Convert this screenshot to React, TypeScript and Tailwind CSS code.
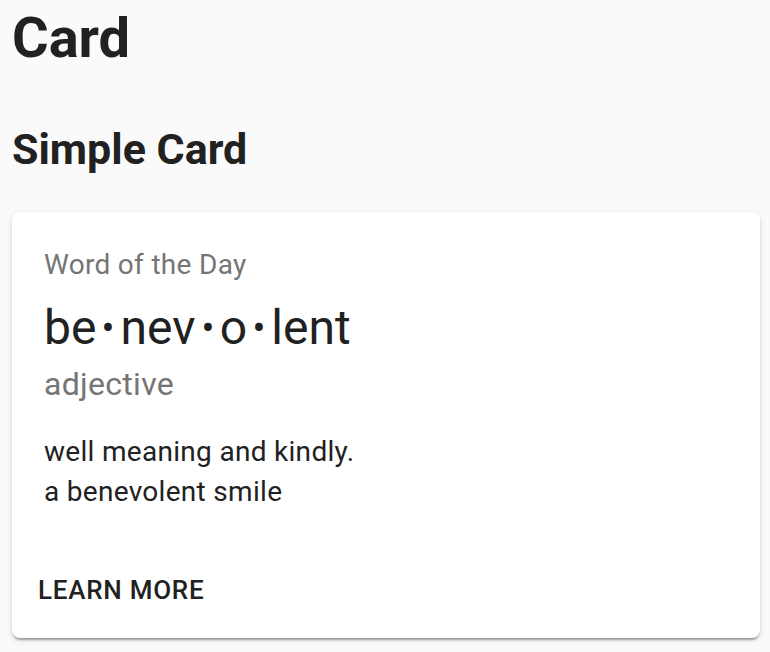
import React from "react";

function Bull() {
  return <span className="mx-[4px] inline-block scale-[0.8]">•</span>;
}

export default function App() {
  return (
    <div
      className="min-h-[652px] bg-[#fafafa] px-[12px] pt-[10px] text-[#212121]"
      style={{ fontFamily: "Roboto, 'Liberation Sans', sans-serif" }}
    >
      <h1 className="m-0 text-[56px] font-bold leading-none">Card</h1>
      <h2 className="mt-[62px] text-[43px] font-bold leading-none">Simple Card</h2>
      <div className="mt-[41px] w-[748px] rounded-[8px] bg-white shadow-[0_4px_2px_-2px_rgba(0,0,0,0.2),0_2px_2px_0_rgba(0,0,0,0.14),0_2px_6px_0_rgba(0,0,0,0.12)]">
        <div className="px-[32px] pt-[33px]">
          <div className="mb-[11px] text-[28px] leading-[40px] tracking-[0.3px] text-[#757575]">Word of the Day</div>
          <div className="text-[48px] leading-[64px] text-[#212121]">
            be<Bull />nev<Bull />o<Bull />lent
          </div>
          <div className="mb-[24px] text-[32px] leading-[48px] tracking-[0.3px] text-[#757575]">adjective</div>
          <div className="text-[28px] leading-[40px] tracking-[0.3px] text-[#212121]">
            well meaning and kindly.
            <br />
            a benevolent smile
          </div>
        </div>
        <div className="px-[16px] pb-[25px] pt-[55px]">
          <button className="rounded-[8px] px-[10px] text-[26px] font-medium uppercase leading-[46px] tracking-[0.74px] text-[#212121]">
            Learn More
          </button>
        </div>
      </div>
    </div>
  );
}
